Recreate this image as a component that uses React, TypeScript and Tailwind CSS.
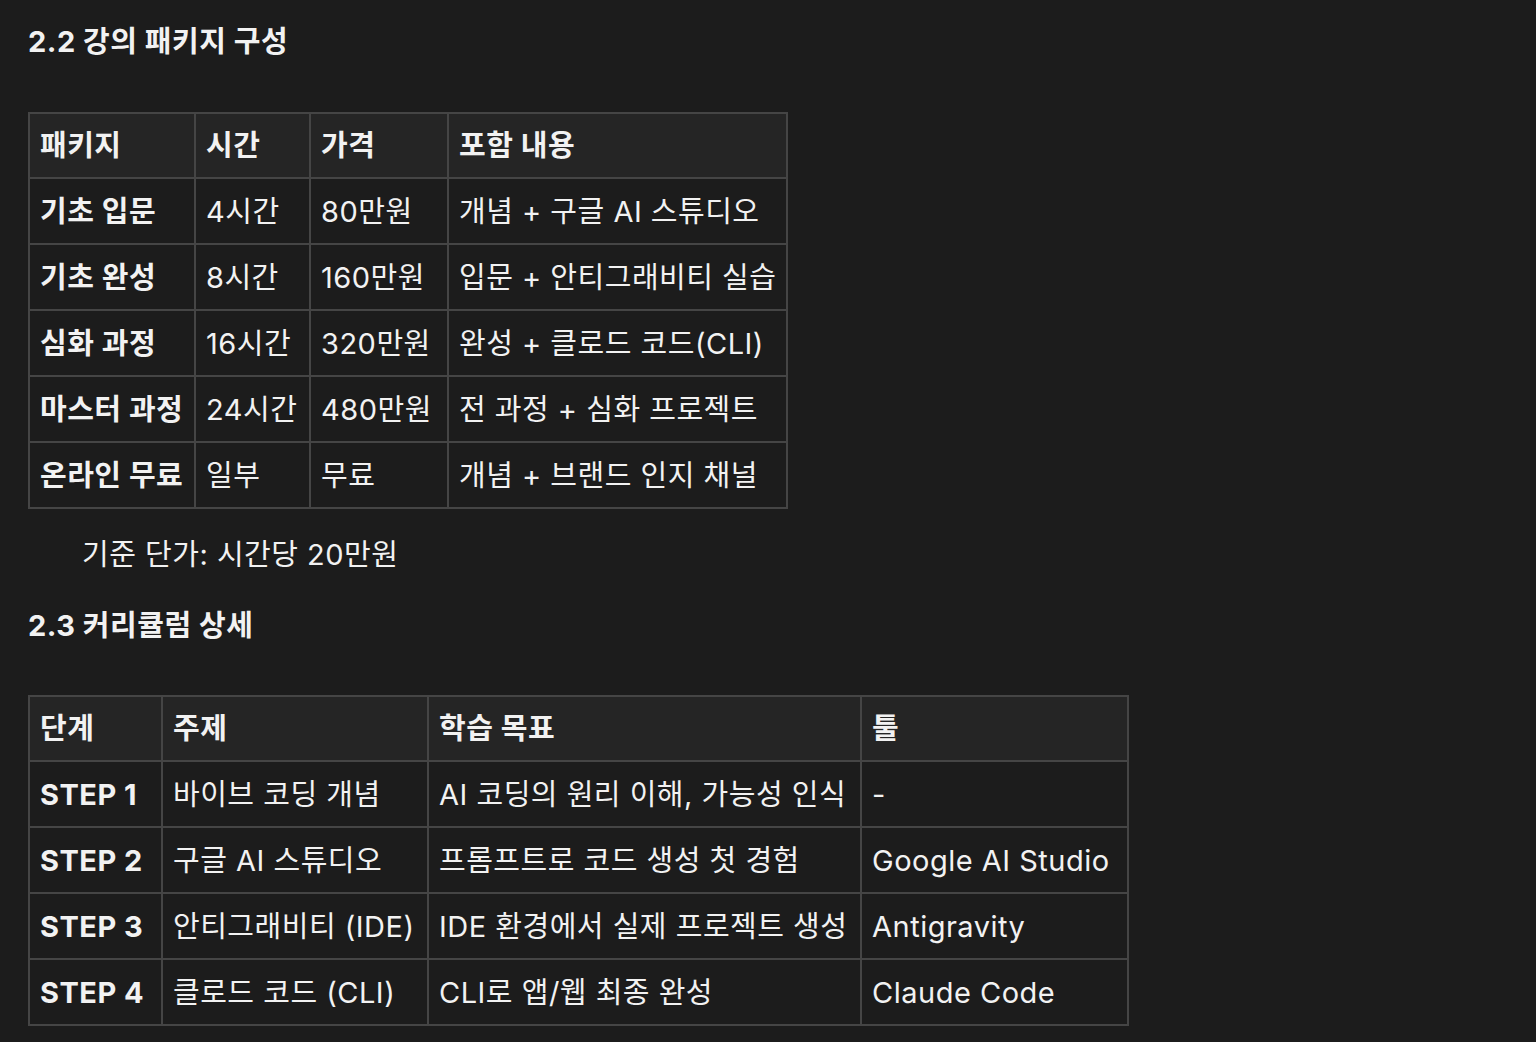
const font = { fontFamily: 'Inter, "Noto Sans CJK KR", sans-serif' }

const packages = [
  ['기초 입문', '4시간', '80만원', '개념 + 구글 AI 스튜디오'],
  ['기초 완성', '8시간', '160만원', '입문 + 안티그래비티 실습'],
  ['심화 과정', '16시간', '320만원', '완성 + 클로드 코드(CLI)'],
  ['마스터 과정', '24시간', '480만원', '전 과정 + 심화 프로젝트'],
  ['온라인 무료', '일부', '무료', '개념 + 브랜드 인지 채널'],
]

const curriculum = [
  ['STEP 1', '바이브 코딩 개념', 'AI 코딩의 원리 이해, 가능성 인식', '-'],
  ['STEP 2', '구글 AI 스튜디오', '프롬프트로 코드 생성 첫 경험', 'Google AI Studio'],
  ['STEP 3', '안티그래비티 (IDE)', 'IDE 환경에서 실제 프로젝트 생성', 'Antigravity'],
  ['STEP 4', '클로드 코드 (CLI)', 'CLI로 앱/웹 최종 완성', 'Claude Code'],
]

function DataTable({ head, rows, widths }: { head: string[]; rows: string[][]; widths: number[] }) {
  return (
    <table className="table-fixed border-collapse border-2 border-[#454545]">
      <colgroup>
        {widths.map((w, i) => (
          <col key={i} style={{ width: w }} />
        ))}
      </colgroup>
      <thead>
        <tr className="bg-[#252525]">
          {head.map((h) => (
            <th key={h} className="h-[65px] border-2 border-[#454545] px-[10px] text-left text-[29px] font-bold leading-none">
              {h}
            </th>
          ))}
        </tr>
      </thead>
      <tbody>
        {rows.map((r) => (
          <tr key={r[0]}>
            {r.map((c, i) => (
              <td
                key={i}
                className={`h-[66px] whitespace-nowrap border-2 border-[#454545] px-[10px] text-[29px] leading-none ${i === 0 ? 'font-bold' : ''}`}
              >
                {c}
              </td>
            ))}
          </tr>
        ))}
      </tbody>
    </table>
  )
}

export default function App() {
  return (
    <div style={font} className="min-h-screen bg-[#1c1c1c] px-[28px] pt-[24px] tracking-[0.5px] text-[#f2f2f2]">
      <h2 className="text-[29px] font-bold leading-[36px]">2.2 강의 패키지 구성</h2>

      <div className="mt-[52px]">
        <DataTable head={['패키지', '시간', '가격', '포함 내용']} rows={packages} widths={[166, 115, 138, 339]} />
      </div>

      <p className="mt-[26px] pl-[54px] text-[29px] leading-[40px]">기준 단가: 시간당 20만원</p>

      <h2 className="mt-[33px] text-[29px] font-bold leading-[36px]">2.3 커리큘럼 상세</h2>

      <div className="mt-[51px]">
        <DataTable head={['단계', '주제', '학습 목표', '툴']} rows={curriculum} widths={[133, 266, 433, 267]} />
      </div>
    </div>
  )
}
